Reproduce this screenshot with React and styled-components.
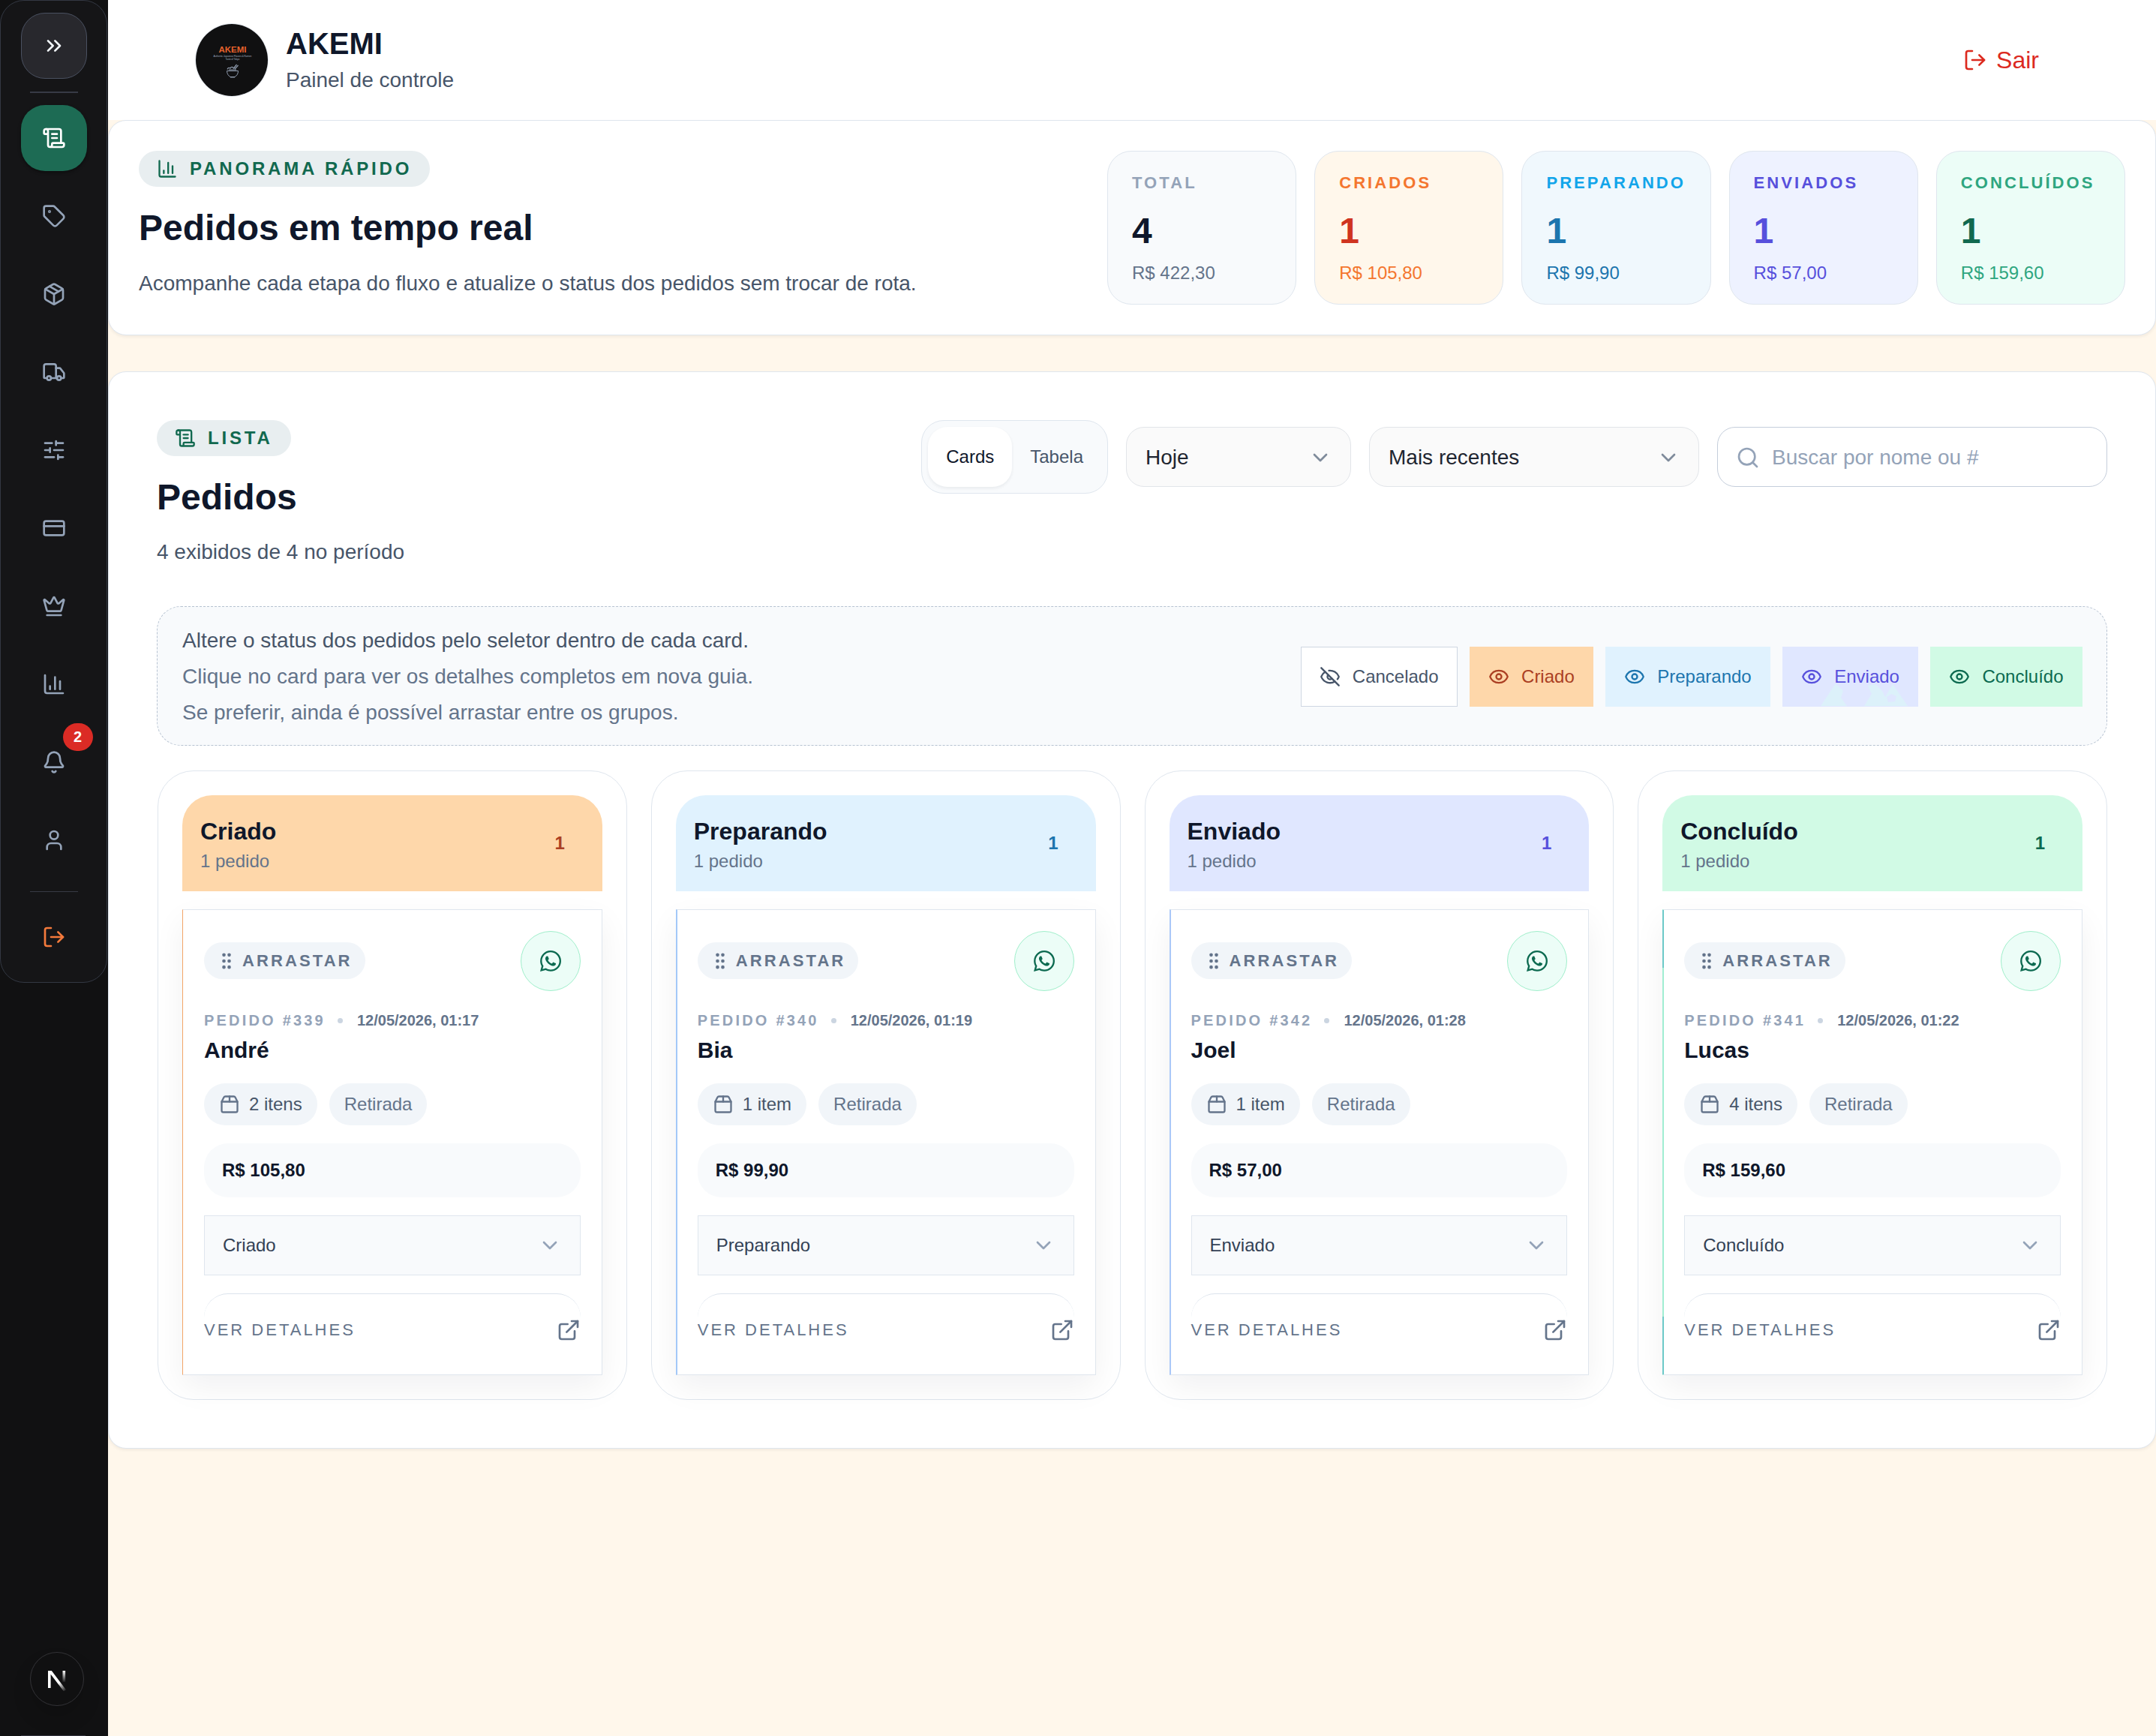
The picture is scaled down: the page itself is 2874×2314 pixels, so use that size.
import React from "react";
import styled, { createGlobalStyle, css } from "styled-components";
import {
  ChevronsRight, ScrollText, Tag, Package, Truck, SlidersHorizontal, CreditCard, Crown,
  ChartColumn, Bell, User, LogOut, ChevronDown, Search, Eye, EyeOff, GripVertical,
  Package2, ExternalLink,
} from "lucide-react";
import { FaWhatsapp } from "react-icons/fa";

const GlobalStyle = createGlobalStyle`
  *, *::before, *::after { box-sizing: border-box; }
  html, body { margin: 0; padding: 0; }
  body {
    background: #fff7eb;
    color: #0f172a;
    font-family: "Liberation Sans", Arial, Helvetica, sans-serif;
    -webkit-font-smoothing: antialiased;
  }
  svg { display: block; flex: none; }
  button, input { font: inherit; color: inherit; margin: 0; }
`;

const Shell = styled.div`
  display: flex;
  min-height: 2314px;
  background: #fff7eb;
`;

/* ---------- Sidebar ---------- */

const Sidebar = styled.aside`
  position: relative;
  display: flex;
  flex-direction: column;
  width: 144px;
  flex: none;
  background: #111112;
`;

const NavPanel = styled.nav`
  display: flex;
  flex-direction: column;
  align-items: center;
  width: 143px;
  height: 1310px;
  padding: 16px 0;
  border: 1px solid #333843;
  border-radius: 32px;
  background: #151517;
`;

const FooterRule = styled.div`
  width: 86px;
  height: 1px;
  margin: auto 0 0 28px;
  background: #33343f;
`;

const CollapseButton = styled.button`
  display: grid;
  place-items: center;
  width: 88px;
  height: 88px;
  padding: 0;
  border: 1px solid #4a5161;
  border-radius: 32px;
  background: #28282d;
  color: #f1f5f9;
`;

const NavRule = styled.div`
  width: 64px;
  height: ${(p) => p.$thick || 1}px;
  margin: ${(p) => p.$margin};
  background: #373a45;
`;

const NavList = styled.div`
  display: flex;
  flex-direction: column;
  gap: 16px;
`;

const NavItem = styled.a`
  position: relative;
  display: grid;
  place-items: center;
  width: 88px;
  height: 88px;
  border-radius: 32px;
  color: ${(p) => p.$color || "#94a3b8"};
  ${(p) =>
    p.$active &&
    css`
      background: #1d6b54;
      color: #ffffff;
      box-shadow: 0 2px 4px rgba(0, 0, 0, 0.4);
    `}
`;

const NavBadge = styled.span`
  position: absolute;
  top: -8px;
  right: -8px;
  width: 40px;
  height: 37px;
  border-radius: 19px;
  background: #db2b25;
  color: #fff;
  font-size: 20px;
  font-weight: 700;
  line-height: 37px;
  text-align: center;
`;

const DevBadge = styled.div`
  position: absolute;
  left: 40px;
  bottom: 40px;
  display: grid;
  place-items: center;
  width: 72px;
  height: 72px;
  border: 1px solid #333337;
  border-radius: 50%;
  background: #101011;
  box-shadow: 0 16px 32px -8px rgba(0, 0, 0, 0.24);
`;

/* ---------- Header ---------- */

const Main = styled.main`
  flex: 1;
  min-width: 0;
  display: flex;
  flex-direction: column;
`;

const Header = styled.header`
  display: flex;
  align-items: center;
  justify-content: space-between;
  height: 160px;
  padding: 0 156px 0 116px;
  background: #fff;
`;

const Brand = styled.div`
  display: flex;
  align-items: center;
  gap: 23px;
`;

const Avatar = styled.div`
  width: 98px;
  height: 98px;
  border: 1px solid #e2e8f0;
  border-radius: 50%;
  overflow: hidden;
`;

const BrandName = styled.div`
  font-size: 40px;
  font-weight: 700;
  line-height: 48px;
`;

const BrandSub = styled.div`
  margin-top: 5px;
  font-size: 28px;
  line-height: 40px;
  color: #475569;
`;

const LogoutButton = styled.button`
  display: flex;
  align-items: center;
  gap: 12px;
  padding: 0;
  border: 0;
  background: none;
  font-size: 32px;
  color: #dc2a1f;
`;

/* ---------- Shared panel parts ---------- */

const Panel = styled.section`
  border: 1px solid #dfe6ee;
  border-radius: 24px;
  background: #fff;
  box-shadow: 0 2px 4px rgba(15, 23, 42, 0.06);
`;

const Kicker = styled.div`
  display: inline-flex;
  align-items: center;
  gap: 16px;
  height: 48px;
  padding: 0 24px;
  border-radius: 24px;
  background: #e8eef0;
  color: #11694f;
  font-size: 24px;
  font-weight: 700;
  letter-spacing: 0.16em;
`;

const Title = styled.h1`
  margin: 27px 0 0;
  font-size: 48px;
  font-weight: 700;
  line-height: 56px;
`;

const Subtitle = styled.p`
  margin: ${(p) => p.$gap}px 0 0;
  font-size: 28px;
  line-height: 44px;
  color: #475569;
`;

/* ---------- Overview ---------- */

const Overview = styled(Panel)`
  display: flex;
  justify-content: space-between;
  height: 287px;
  padding: 40px;
`;

const StatGrid = styled.div`
  display: grid;
  grid-template-columns: repeat(5, 1fr);
  gap: 24px;
  width: 1357px;
`;

const StatCard = styled.div`
  padding: 25px 32px 23px;
  border: 1px solid #dfe6ee;
  border-radius: 32px;
  background: ${(p) => p.$bg};
`;

const StatLabel = styled.div`
  font-size: 22px;
  font-weight: 700;
  line-height: 34px;
  letter-spacing: 0.14em;
  white-space: nowrap;
  color: ${(p) => p.$color};
`;

const StatValue = styled.div`
  margin-top: 15px;
  font-size: 48px;
  font-weight: 700;
  line-height: 64px;
  color: ${(p) => p.$color};
`;

const StatAmount = styled.div`
  margin-top: 8px;
  font-size: 24px;
  line-height: 32px;
  color: ${(p) => p.$color};
`;

/* ---------- Orders panel ---------- */

const Orders = styled(Panel)`
  margin-top: 48px;
  padding: 64px;
`;

const OrdersHead = styled.div`
  display: flex;
  align-items: flex-start;
  justify-content: space-between;
  margin-bottom: 50px;
`;

const Controls = styled.div`
  display: flex;
  align-items: center;
  gap: 24px;
`;

const Toggle = styled.div`
  display: flex;
  padding: 8px;
  border: 1px solid #dfe6ee;
  border-radius: 30px;
  background: #f8fafc;
`;

const ToggleOption = styled.button`
  height: 80px;
  padding: 0 24px;
  border: 0;
  border-radius: 26px;
  background: ${(p) => (p.$on ? "#fff" : "none")};
  color: ${(p) => (p.$on ? "#0f172a" : "#475569")};
  box-shadow: ${(p) => (p.$on ? "0 2px 4px rgba(15, 23, 42, 0.07)" : "none")};
  font-size: 24px;
`;

const Select = styled.div`
  display: flex;
  align-items: center;
  justify-content: space-between;
  width: ${(p) => p.$width}px;
  height: 80px;
  padding: 2px 24px 0 25px;
  border: 1px solid #e2e5e9;
  border-radius: 24px;
  background: #fafafa;
  font-size: 28px;
  color: #1e2530;

  svg { color: #7f8b9b; }
`;

const SearchBox = styled.label`
  display: flex;
  align-items: center;
  gap: 16px;
  width: 520px;
  height: 80px;
  padding: 1px 24px 0;
  border: 1px solid #c5cedb;
  border-radius: 24px;
  background: #fff;
  color: #94a3b8;
`;

const SearchInput = styled.input`
  flex: 1;
  min-width: 0;
  padding: 0;
  border: 0;
  outline: 0;
  background: none;
  font-size: 28px;

  &::placeholder { color: #94a3b8; opacity: 1; }
`;

const HintBox = styled.div`
  display: flex;
  align-items: center;
  justify-content: space-between;
  padding: 21px 32px 19px 33px;
  border: 1px dashed #b6c2d1;
  border-radius: 32px;
  background: #f8fafc;
`;

const HintLine = styled.p`
  margin: 0;
  font-size: 28px;
  line-height: 48px;
  color: ${(p) => (p.$strong ? "#475569" : "#64748b")};
`;

const Legend = styled.div`
  display: flex;
  gap: 16px;
`;

const LegendButton = styled.button`
  position: relative;
  display: flex;
  align-items: center;
  gap: 16px;
  height: 80px;
  padding: 0 24.5px 0 24px;
  border: 1px solid ${(p) => p.$border || p.$bg};
  background: ${(p) => p.$bg};
  color: ${(p) => p.$color};
  font-size: 24px;

  > * { position: relative; }
`;

const PeakOverlay = styled.svg`
  && {
    position: absolute;
    left: 50px;
    bottom: 0;
  }
`;

/* ---------- Board ---------- */

const Board = styled.div`
  display: grid;
  grid-template-columns: repeat(4, 1fr);
  gap: 32px;
  margin: 33px 0 0 1px;
`;

const Column = styled.div`
  padding: 32px;
  border: 1px solid #dfe6ee;
  border-radius: 48px;
`;

const ColumnHead = styled.div`
  display: flex;
  align-items: center;
  justify-content: space-between;
  height: 128px;
  padding: 0 50px 0 24px;
  border-radius: 40px 40px 0 0;
  background: ${(p) => p.$bg};
`;

const ColumnTitle = styled.div`
  font-size: 32px;
  font-weight: 700;
  line-height: 48px;
`;

const ColumnSub = styled.div`
  font-size: 24px;
  line-height: 32px;
  color: #64748b;
`;

const ColumnCount = styled.div`
  font-size: 24px;
  font-weight: 700;
  color: ${(p) => p.$color};
`;

const Card = styled.article`
  position: relative;
  margin-top: 24px;
  padding: 28px 28px 28px ${(p) => (p.$thin ? 28 : 27)}px;
  border: 1px solid #dfe6ee;
  border-left: ${(p) => (p.$thin ? 1 : 2)}px solid ${(p) => p.$edge};
  background: #fff;
  box-shadow: 0 16px 40px rgba(15, 23, 42, 0.06);

  ${(p) =>
    p.$caps &&
    css`
      &::before,
      &::after {
        content: "";
        position: absolute;
        left: -2px;
        width: 2px;
        height: 77px;
        background: ${p.$caps};
      }
      &::before { top: 0; }
      &::after { bottom: 0; }
    `}
`;

const CardTop = styled.div`
  display: flex;
  align-items: center;
  justify-content: space-between;
`;

const DragHandle = styled.div`
  display: flex;
  align-items: center;
  gap: 7px;
  height: 49px;
  margin-bottom: 1px;
  padding: 0 17px 0 16px;
  border-radius: 25px;
  background: #f1f5f9;
  color: #64748b;
  font-size: 22px;
  font-weight: 700;
  line-height: 48px;
  letter-spacing: 3.1px;
`;

const ChatButton = styled.button`
  display: grid;
  place-items: center;
  width: 80px;
  height: 80px;
  padding: 0;
  border: 1px solid #a0efcb;
  border-radius: 50%;
  background: #ecfdf7;
  color: #0c6a50;
`;

const Meta = styled.div`
  display: flex;
  align-items: center;
  gap: 16px;
  height: 30px;
  margin-top: 24px;
  font-size: 20px;
  font-weight: 700;
  line-height: 30px;
  color: #64748b;
`;

const OrderNumber = styled.span`
  letter-spacing: 0.16em;
  color: #94a3b8;
`;

const MetaDot = styled.span`
  width: 7px;
  height: 7px;
  margin-right: 3px;
  border-radius: 50%;
  background: #cbd5e1;
`;

const Customer = styled.div`
  margin-top: 5px;
  font-size: 30px;
  font-weight: 700;
  line-height: 40px;
`;

const Chips = styled.div`
  display: flex;
  gap: 16px;
  margin-top: 24px;
`;

const Chip = styled.div`
  display: flex;
  align-items: center;
  gap: 12px;
  height: 56px;
  padding: 0 20px;
  border-radius: 28px;
  background: #f1f5f9;
  font-size: 24px;
  color: ${(p) => (p.$muted ? "#64748b" : "#475569")};

  svg { color: #64748b; }
`;

const Price = styled.div`
  height: 72px;
  margin-top: 24px;
  padding: 0 24px;
  border-radius: 32px;
  background: #f8fafc;
  font-size: 24px;
  font-weight: 700;
  line-height: 72px;
`;

const StatusSelect = styled.div`
  display: flex;
  align-items: center;
  justify-content: space-between;
  height: 80px;
  margin-top: 24px;
  padding: 0 24px;
  border: 1px solid #dfe6ee;
  background: #f8fafc;
  font-size: 24px;
  color: #334155;

  svg { color: #94a3b8; }
`;

const Details = styled.a`
  display: flex;
  align-items: center;
  justify-content: space-between;
  height: 80px;
  margin-top: 24px;
  padding-top: 17px;
  border-top: 1px solid #dbe3ec;
  border-radius: 32px 32px 0 0;
  font-size: 22px;
  letter-spacing: 3px;
  color: #64748b;
`;

/* ---------- Data ---------- */

const NAV = [ScrollText, Tag, Package, Truck, SlidersHorizontal, CreditCard, Crown, ChartColumn, Bell, User];

const STATS = [
  { label: "TOTAL", value: "4", amount: "R$ 422,30", bg: "#f8fafc", tone: "#94a3b8", strong: "#0f172a", soft: "#64748b" },
  { label: "CRIADOS", value: "1", amount: "R$ 105,80", bg: "#fff7eb", tone: "#f4762f", strong: "#cf3420", soft: "#f4762f" },
  { label: "PREPARANDO", value: "1", amount: "R$ 99,90", bg: "#f0f8fd", tone: "#12a5ea", strong: "#1c75ae", soft: "#1c75ae" },
  { label: "ENVIADOS", value: "1", amount: "R$ 57,00", bg: "#eef2ff", tone: "#5750dc", strong: "#5750dc", soft: "#5750dc" },
  { label: "CONCLUÍDOS", value: "1", amount: "R$ 159,60", bg: "#ecfdf7", tone: "#2fa680", strong: "#11694f", soft: "#2fa680" },
];

const LEGEND = [
  { label: "Cancelado", bg: "#ffffff", border: "#cfd7e2", color: "#475569", hidden: true },
  { label: "Criado", bg: "#fed7aa", color: "#ab3f23" },
  { label: "Preparando", bg: "#e0f2fe", color: "#1c75ae" },
  { label: "Enviado", bg: "#e0e7ff", color: "#5750dc", peaks: true },
  { label: "Concluído", bg: "#d1fae5", color: "#0c6a50" },
];

const COLUMNS = [
  { title: "Criado", bg: "#fed7aa", color: "#ab3f23", edge: "#f3a568", thin: true, id: 339, time: "01:17", name: "André", items: "2 itens", price: "R$ 105,80" },
  { title: "Preparando", bg: "#e0f2fe", color: "#1c75ae", edge: "#a3c8f8", id: 340, time: "01:19", name: "Bia", items: "1 item", price: "R$ 99,90" },
  { title: "Enviado", bg: "#e0e7ff", color: "#5750dc", edge: "#aac8f8", id: 342, time: "01:28", name: "Joel", items: "1 item", price: "R$ 57,00" },
  { title: "Concluído", bg: "#d1fae5", color: "#0c6a50", edge: "#a0edd2", caps: "#6cc9c8", id: 341, time: "01:22", name: "Lucas", items: "4 itens", price: "R$ 159,60" },
];

/* ---------- Drawings ---------- */

const BrandLogo = () => (
  <svg width="96" height="96" viewBox="0 0 96 96">
    <rect width="96" height="96" fill="#101011" />
    <text x="49" y="38" textAnchor="middle" textLength="37" fontSize="11.5" fontWeight="700" fill="#e8622c">AKEMI</text>
    <text x="49" y="44" textAnchor="middle" textLength="51" fontSize="3.4" fill="#98a3b4">Authentic Japanese Flavors &amp; Ramen</text>
    <text x="49" y="48" textAnchor="middle" textLength="19" fontSize="3.4" fill="#98a3b4">Taste of Tokyo</text>
    <g fill="none" stroke="#8d99ab" strokeWidth="1">
      <path d="M41.5 62.500h15c0 4-2 6.500-4.500 8h-6c-2.500-1.500-4.500-4-4.500-8zM46 71h6" />
      <path d="M42 60.500c1-3 3-2 4-1.500 1-2 3-2 4-.5l3 .5M44 61h10M50 59.500l4.500-5.500M52 60l4.500-5" strokeWidth="1.200" />
    </g>
  </svg>
);

const DevMark = () => (
  <svg width="30" height="32" viewBox="0 0 30 32">
    <defs>
      <linearGradient id="devDiagonal" x1="12" y1="14" x2="26" y2="31" gradientUnits="userSpaceOnUse">
        <stop offset="0.4" stopColor="#fff" />
        <stop offset="1" stopColor="#fff" stopOpacity="0.1" />
      </linearGradient>
      <linearGradient id="devStem" x1="0" y1="5" x2="0" y2="20" gradientUnits="userSpaceOnUse">
        <stop offset="0" stopColor="#fff" />
        <stop offset="1" stopColor="#fff" stopOpacity="0.05" />
      </linearGradient>
    </defs>
    <path d="M3 5h4.800L27 30.400l-3 2.100L6.600 9.800V28H3z" fill="url(#devDiagonal)" />
    <rect x="22.500" y="5" width="3.600" height="15" fill="url(#devStem)" />
  </svg>
);

const Peaks = () => (
  <PeakOverlay width="120" height="30" viewBox="0 0 120 30">
    <path d="M0 30L20 0l10 10-3 9 8 11zM58 30L68 14 63 3l10-2 9 9 4 8 10-17 20 29z" fill="#dcf1fa" />
    <path d="M88 18l6-4 7 3-2 7-9 1z" fill="#e0e7ff" />
  </PeakOverlay>
);

/* ---------- Composition ---------- */

function OrderColumn({ col }) {
  return (
    <Column>
      <ColumnHead $bg={col.bg}>
        <div>
          <ColumnTitle>{col.title}</ColumnTitle>
          <ColumnSub>1 pedido</ColumnSub>
        </div>
        <ColumnCount $color={col.color}>1</ColumnCount>
      </ColumnHead>
      <Card $edge={col.edge} $thin={col.thin} $caps={col.caps}>
        <CardTop>
          <DragHandle>
            <GripVertical size={28} />
            ARRASTAR
          </DragHandle>
          <ChatButton aria-label="WhatsApp">
            <FaWhatsapp size={32} />
          </ChatButton>
        </CardTop>
        <Meta>
          <OrderNumber>PEDIDO #{col.id}</OrderNumber>
          <MetaDot />
          <span>12/05/2026, {col.time}</span>
        </Meta>
        <Customer>{col.name}</Customer>
        <Chips>
          <Chip>
            <Package2 size={28} />
            {col.items}
          </Chip>
          <Chip $muted>Retirada</Chip>
        </Chips>
        <Price>{col.price}</Price>
        <StatusSelect>
          {col.title}
          <ChevronDown size={32} />
        </StatusSelect>
        <Details>
          VER DETALHES
          <ExternalLink size={32} />
        </Details>
      </Card>
    </Column>
  );
}

export default function App() {
  return (
    <>
      <GlobalStyle />
      <Shell>
        <Sidebar>
          <NavPanel>
            <CollapseButton aria-label="Expandir">
              <ChevronsRight size={32} />
            </CollapseButton>
            <NavRule $thick={2} $margin="17px 0 16px" />
            <NavList>
              {NAV.map((Icon, i) => (
                <NavItem key={i} $active={i === 0}>
                  <Icon size={32} />
                  {Icon === Bell && <NavBadge>2</NavBadge>}
                </NavItem>
              ))}
            </NavList>
            <NavRule $margin="24px 0 16px" />
            <NavItem $color="#f47a3c">
              <LogOut size={32} />
            </NavItem>
          </NavPanel>
          <FooterRule />
          <DevBadge>
            <DevMark />
          </DevBadge>
        </Sidebar>

        <Main>
          <Header>
            <Brand>
              <Avatar>
                <BrandLogo />
              </Avatar>
              <div>
                <BrandName>AKEMI</BrandName>
                <BrandSub>Painel de controle</BrandSub>
              </div>
            </Brand>
            <LogoutButton>
              <LogOut size={32} />
              Sair
            </LogoutButton>
          </Header>

          <Overview>
            <div>
              <Kicker>
                <ChartColumn size={28} />
                PANORAMA RÁPIDO
              </Kicker>
              <Title>Pedidos em tempo real</Title>
              <Subtitle $gap={24}>
                Acompanhe cada etapa do fluxo e atualize o status dos pedidos sem trocar de rota.
              </Subtitle>
            </div>
            <StatGrid>
              {STATS.map((s) => (
                <StatCard key={s.label} $bg={s.bg}>
                  <StatLabel $color={s.tone}>{s.label}</StatLabel>
                  <StatValue $color={s.strong}>{s.value}</StatValue>
                  <StatAmount $color={s.soft}>{s.amount}</StatAmount>
                </StatCard>
              ))}
            </StatGrid>
          </Overview>

          <Orders>
            <OrdersHead>
              <div>
                <Kicker>
                  <ScrollText size={28} />
                  LISTA
                </Kicker>
                <Title>Pedidos</Title>
                <Subtitle $gap={23}>4 exibidos de 4 no período</Subtitle>
              </div>
              <Controls>
                <Toggle>
                  <ToggleOption $on>Cards</ToggleOption>
                  <ToggleOption>Tabela</ToggleOption>
                </Toggle>
                <Select $width={300}>
                  Hoje
                  <ChevronDown size={32} />
                </Select>
                <Select $width={440}>
                  Mais recentes
                  <ChevronDown size={32} />
                </Select>
                <SearchBox>
                  <Search size={32} />
                  <SearchInput placeholder="Buscar por nome ou #" />
                </SearchBox>
              </Controls>
            </OrdersHead>

            <HintBox>
              <div>
                <HintLine $strong>Altere o status dos pedidos pelo seletor dentro de cada card.</HintLine>
                <HintLine>Clique no card para ver os detalhes completos em nova guia.</HintLine>
                <HintLine>Se preferir, ainda é possível arrastar entre os grupos.</HintLine>
              </div>
              <Legend>
                {LEGEND.map((l) => (
                  <LegendButton key={l.label} $bg={l.bg} $border={l.border} $color={l.color}>
                    {l.peaks && <Peaks />}
                    {l.hidden ? <EyeOff size={28} /> : <Eye size={28} />}
                    <span>{l.label}</span>
                  </LegendButton>
                ))}
              </Legend>
            </HintBox>

            <Board>
              {COLUMNS.map((c) => (
                <OrderColumn key={c.id} col={c} />
              ))}
            </Board>
          </Orders>
        </Main>
      </Shell>
    </>
  );
}
